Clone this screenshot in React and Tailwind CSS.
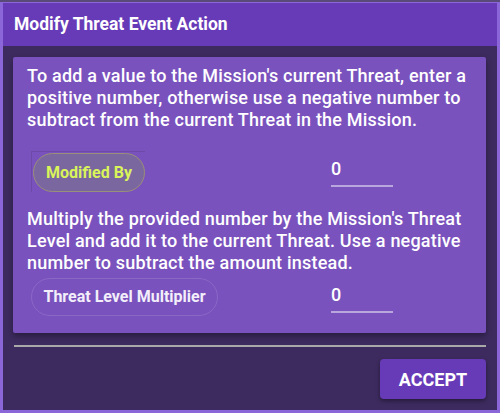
import React, { useState } from 'react';

const Field = ({ value, onChange }) => (
    <div className="w-[62px] border-b-2 border-[#b9a6dd]">
        <input
            value={value}
            onChange={(e) => onChange(e.target.value)}
            className="w-full bg-transparent text-white text-[18px] font-medium leading-[22px] pb-[5px] outline-none"
        />
    </div>
);

export default function App() {
    const [modified, setModified] = useState('0');
    const [multiplier, setMultiplier] = useState('0');

    return (
        <div className="w-[500px] h-[413px] bg-[#3c2a5d] font-['Roboto',sans-serif] flex flex-col">
            <div className="h-[2px] bg-[#5a4a7a]" />
            <div className="flex-1 flex flex-col border-t border-x-[3px] border-b-[3px] border-[#8a66d8]">
                <div className="h-[43px] bg-[#673ab7] flex items-center px-[11px]">
                    <h1 className="text-white text-[17.5px] font-bold">Modify Threat Event Action</h1>
                </div>

                <div className="flex-1 bg-[#3d2b5f] px-[10px] pt-[11px] flex flex-col">
                    <div className="w-[473px] h-[276px] bg-[#7a52bd] rounded-[2px] shadow-[0_3px_6px_rgba(0,0,0,0.35)] pt-[8px] px-[14px]">
                        <p className="text-white text-[18px] font-medium leading-[22px] tracking-[0.2px]">
                            To add a value to the Mission's current Threat, enter a positive number, otherwise use a negative number to subtract from the current Threat in the Mission.
                        </p>
                        <div className="flex items-center mt-[20px] pl-[4px]">
                            <div className="border-t border-l border-[#6c4aa6] pt-[1px] pl-[1px] pr-[1px] w-[114px]">
                                <div className="w-[112px] h-[39px] rounded-full bg-[#7b679f] border border-[#9a8f78] flex items-center justify-center">
                                    <span className="text-[#d9f55a] text-[16px] font-bold">Modified By</span>
                                </div>
                            </div>
                            <div className="ml-[186px] mt-[2px]">
                                <Field value={modified} onChange={setModified} />
                            </div>
                        </div>
                        <p className="text-white text-[18px] font-medium leading-[22px] tracking-[0.2px] mt-[16px]">
                            Multiply the provided number by the Mission's Threat Level and add it to the current Threat. Use a negative number to subtract the amount instead.
                        </p>
                        <div className="flex items-center mt-[4px] pl-[4px]">
                            <div className="w-[187px] h-[38px] rounded-full border border-[#8a68c6] flex items-center justify-center">
                                <span className="text-[#f2eefa] text-[16px] font-bold">Threat Level Multiplier</span>
                            </div>
                            <div className="ml-[113px] mt-[2px]">
                                <Field value={multiplier} onChange={setMultiplier} />
                            </div>
                        </div>
                    </div>

                    <div className="h-[2px] bg-[#a9a9a9] mt-[12px] ml-[1px] w-[472px]" />

                    <div className="flex justify-end mt-[12px] pr-[1px]">
                        <button className="w-[106px] h-[40px] rounded-[4px] bg-[#673ab7] text-white text-[18px] font-bold shadow-[0_2px_4px_rgba(0,0,0,0.4)]">
                            ACCEPT
                        </button>
                    </div>
                </div>
            </div>
        </div>
    );
}
